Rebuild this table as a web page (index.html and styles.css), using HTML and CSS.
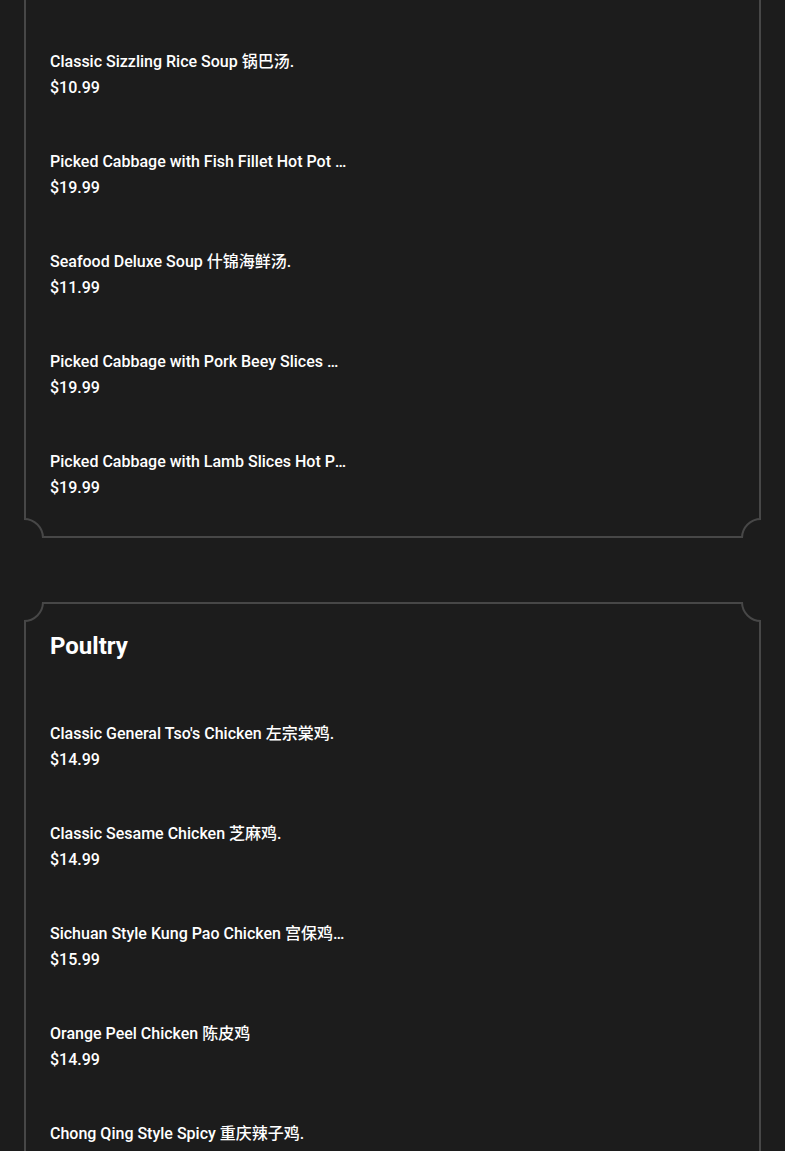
FILE: index.html
```html
<!DOCTYPE html>
<html lang="en">
<head>
<meta charset="utf-8">
<title>Menu</title>
<link rel="stylesheet" href="styles.css">
</head>
<body>
<main class="menu">
  <section class="card card--continued">
    <span class="corner corner--bl"></span>
    <span class="corner corner--br"></span>
    <ul class="items">
      <li class="item"><div class="item-name">Classic Sizzling Rice Soup 锅巴汤.</div><div class="item-price">$10.99</div></li>
      <li class="item"><div class="item-name">Picked Cabbage with Fish Fillet Hot Pot 酸菜鱼火锅.</div><div class="item-price">$19.99</div></li>
      <li class="item"><div class="item-name">Seafood Deluxe Soup 什锦海鲜汤.</div><div class="item-price">$11.99</div></li>
      <li class="item"><div class="item-name">Picked Cabbage with Pork Beey Slices Hot Pot 酸菜肉片火锅.</div><div class="item-price">$19.99</div></li>
      <li class="item"><div class="item-name">Picked Cabbage with Lamb Slices Hot Pot 酸菜羊肉火锅.</div><div class="item-price">$19.99</div></li>
    </ul>
  </section>

  <section class="card">
    <span class="corner corner--tl"></span>
    <span class="corner corner--tr"></span>
    <span class="corner corner--bl"></span>
    <span class="corner corner--br"></span>
    <h2 class="card-title">Poultry</h2>
    <ul class="items">
      <li class="item"><div class="item-name">Classic General Tso's Chicken 左宗棠鸡.</div><div class="item-price">$14.99</div></li>
      <li class="item"><div class="item-name">Classic Sesame Chicken 芝麻鸡.</div><div class="item-price">$14.99</div></li>
      <li class="item"><div class="item-name">Sichuan Style Kung Pao Chicken 宫保鸡丁.</div><div class="item-price">$15.99</div></li>
      <li class="item"><div class="item-name">Orange Peel Chicken 陈皮鸡</div><div class="item-price">$14.99</div></li>
      <li class="item"><div class="item-name">Chong Qing Style Spicy 重庆辣子鸡.</div><div class="item-price">$15.99</div></li>
    </ul>
  </section>
</main>
</body>
</html>
```
FILE: styles.css
```css
html, body {
  margin: 0;
  padding: 0;
  background: #1c1c1c;
}
body {
  font-family: Roboto, "Noto Sans CJK SC", sans-serif;
  color: #ffffff;
}
.menu {
  display: flex;
  flex-direction: column;
  gap: 64px;
  padding: 0 24px;
}
.card {
  position: relative;
  overflow: clip;
  overflow-clip-margin: border-box;
  border: 2px solid #474747;
  padding: 24px 24px 12px;
}
.card--continued {
  border-top: none;
}
.corner {
  position: absolute;
  width: 36px;
  height: 36px;
  border: 2px solid #474747;
  border-radius: 50%;
  background: #1c1c1c;
}
.corner--tl { left: -22px; top: -22px; }
.corner--tr { right: -22px; top: -22px; }
.corner--bl { left: -22px; bottom: -22px; }
.corner--br { right: -22px; bottom: -22px; }
.card-title {
  margin: 2px 0 34px;
  font-size: 24px;
  line-height: 32px;
  font-weight: 700;
}
.items {
  list-style: none;
  margin: 0;
  padding: 0;
}
.item {
  padding: 25px 0 23px;
}
.item-name {
  max-width: 298px;
  font-size: 16px;
  line-height: 26px;
  font-weight: 500;
  white-space: nowrap;
  overflow: hidden;
  text-overflow: ellipsis;
}
.item-price {
  font-size: 16px;
  line-height: 26px;
  font-weight: 500;
}
```
